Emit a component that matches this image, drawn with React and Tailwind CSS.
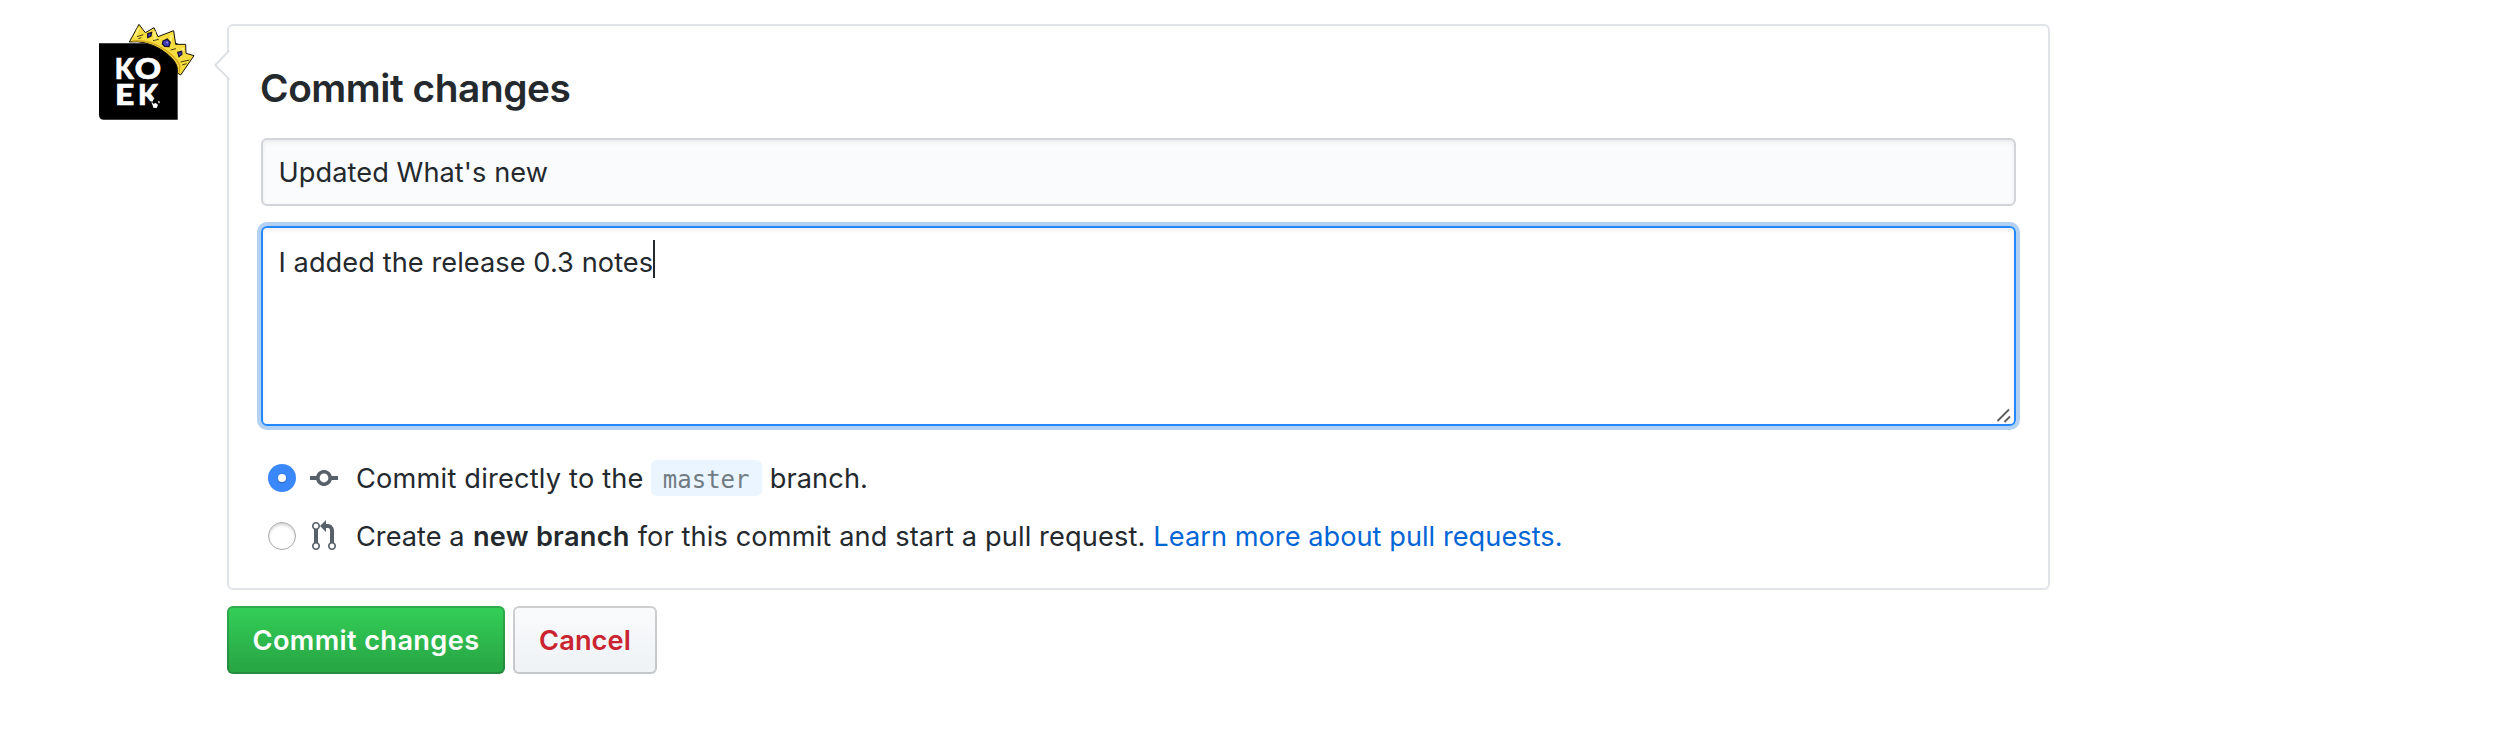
function Avatar() {
  return (
    <svg className="h-24 w-24 shrink-0" viewBox="57 42 288 288" aria-label="Koek">
      <path d="M57 100H293V329H72Q57 329 57 314Z" fill="#000" />
      <g fill="#fff" stroke="#fff" strokeWidth="2" fontFamily="Lato, sans-serif" fontWeight="900" fontSize="84">
        <text x="104" y="206" textLength="57" lengthAdjust="spacingAndGlyphs">K</text>
        <text x="164" y="206" textLength="79" lengthAdjust="spacingAndGlyphs">O</text>
        <text x="105" y="285" textLength="58" lengthAdjust="spacingAndGlyphs">E</text>
        <text x="174" y="285" textLength="60" lengthAdjust="spacingAndGlyphs">K</text>
      </g>
      <path d="M206 272L217 275L222 266L242 260V292H206Z" fill="#000" />
      <path d="M217 283L227 279L234 284L230 294L220 293ZM214 277l6 2l-3 5ZM233 273l7 2l-3 6Z" fill="#fff" />
      <path
        d="M148 96L177 43L196 68L222 53L234 80L281 62L287 103L317 103L318 130L342 137L302 195L292 189Q296 168 278 147Q244 111 197 99Q171 93 148 96Z"
        fill="#f6dc3e"
        stroke="#16120a"
        strokeWidth="3"
        strokeLinejoin="round"
      />
      <path d="M176 54L165 80M223 64L226 90M275 74L268 104M309 114L301 140" stroke="#fff07a" strokeWidth="7" fill="none" />
      <path d="M157 93Q205 88 248 115Q287 139 299 166L298 188" stroke="#d3a822" strokeWidth="4" fill="none" />
      <path d="M171 80L190 74M175 86L184 83M219 92L236 88M272 120L288 116M302 156L328 150M306 165L320 161" stroke="#2a2108" strokeWidth="2.5" fill="none" />
      <path d="M203 71L215 67L213 78L203 83ZM249 93L262 87L271 97L267 110L254 109L247 102ZM293 127L305 124L306 133L297 140Z" fill="#4038b4" stroke="#15102c" strokeWidth="3.5" />
      <path d="M256 96l7 -1l1 6Z" fill="#aaa6ee" />
    </svg>
  );
}

function CommitIcon() {
  return (
    <svg className="h-8 w-7" viewBox="0 0 14 16" fill="#586069">
      <path fillRule="evenodd" d="M10.86 7c-.45-1.72-2-3-3.86-3-1.86 0-3.41 1.28-3.86 3H0v2h3.14c.45 1.72 2 3 3.86 3 1.86 0 3.41-1.28 3.86-3H14V7h-3.14zM7 10.2c-1.22 0-2.2-.98-2.2-2.2 0-1.22.98-2.2 2.2-2.2 1.22 0 2.2.98 2.2 2.2 0 1.22-.98 2.2-2.2 2.2z" />
    </svg>
  );
}

function PullRequestIcon() {
  return (
    <svg className="h-8 w-6" viewBox="0 0 12 16" fill="#586069">
      <path fillRule="evenodd" d="M11 11.28V5c-.03-.78-.34-1.47-.94-2.06C9.46 2.35 8.78 2.03 8 2H7V0L4 3l3 3V4h1c.27.02.48.11.69.31.21.2.3.42.31.69v6.28A1.993 1.993 0 0010 15a1.993 1.993 0 001-3.72zm-1 2.92c-.66 0-1.2-.55-1.2-1.2 0-.65.55-1.2 1.2-1.2.65 0 1.2.55 1.2 1.2 0 .65-.55 1.2-1.2 1.2zM4 3c0-1.11-.89-2-2-2a1.993 1.993 0 00-1 3.72v6.56A1.993 1.993 0 002 15a1.993 1.993 0 001-3.72V4.72c.59-.34 1-.98 1-1.72zm-.8 10c0 .66-.55 1.2-1.2 1.2-.65 0-1.2-.55-1.2-1.2 0-.65.55-1.2 1.2-1.2.65 0 1.2.55 1.2 1.2zM2 4.2C1.34 4.2.8 3.65.8 3c0-.65.55-1.2 1.2-1.2.65 0 1.2.55 1.2 1.2 0 .65-.55 1.2-1.2 1.2z" />
    </svg>
  );
}

function Radio({ checked }) {
  return checked ? (
    <span role="radio" aria-checked="true" className="flex size-7 items-center justify-center rounded-full bg-[#3b88fd]">
      <span className="size-2 rounded-full bg-white shadow-[0_1px_2px_rgba(0,0,0,0.3)]" />
    </span>
  ) : (
    <span role="radio" aria-checked="false" className="size-7 rounded-full border border-[#a9a9a9] bg-white shadow-[inset_0_2px_3px_rgba(0,0,0,0.16)]" />
  );
}

export default function App() {
  return (
    <div className="h-[730px] bg-white pt-6 pl-[99px] font-['Inter',sans-serif] text-[27.2px] text-[#24292e]">
      <div className="flex items-start gap-8">
        <Avatar />
        <div className="flex w-[1823px] flex-col">
          <form className="relative flex h-[566px] flex-col rounded-md border-2 border-[#e1e4e8] px-8">
            <svg className="absolute top-[23px] -left-[15px] h-8 w-4" viewBox="0 0 16 32" fill="none">
              <path d="M17 0.5L1.5 16L17 31.5Z" fill="#fff" />
              <path d="M15.5 1.5L1.2 16L15.5 30.5" stroke="#dcdfe2" strokeWidth="1.8" />
            </svg>
            <h3 className="mt-[38px] -ml-px h-[48px] text-[38.8px] leading-[48px] font-semibold tracking-[-0.44px]">Commit changes</h3>
            <div className="mt-[26px] flex h-[68px] items-center rounded-md border-2 border-[#d1d5da] bg-[#fafbfc] px-[15.5px] pt-0.5 tracking-[0.06px] shadow-[inset_0_2px_4px_rgba(27,31,35,0.075)]">
              Updated What&#39;s new
            </div>
            <div className="relative mt-5 flex h-[200px] items-start rounded-md border-2 border-[#2188ff] px-[15.5px] pt-3 shadow-[inset_0_2px_4px_rgba(27,31,35,0.075),0_0_0_4px_rgba(3,102,214,0.3)]">
              <span className="mt-[5px] leading-[36px] tracking-[0.065px]">I added the release 0.3 notes</span>
              <span className="h-[38px] w-0.5 bg-[#24292e]" />
              <svg className="absolute right-[3px] bottom-px h-4 w-4" viewBox="0 0 16 16" stroke="#5c5c5c" strokeWidth="1.8">
                <path d="M2.5 14L14 2.5M9.5 15L15 9.5" />
              </svg>
            </div>
            <div className="mt-[34px] flex h-9 items-center pl-[7px]">
              <Radio checked />
              <span className="ml-[14px]"><CommitIcon /></span>
              <span className="ml-[18px] pt-0.5 tracking-[0.2px]">Commit directly to the</span>
              <code className="ml-[7px] flex h-9 w-[111px] items-center justify-center rounded-md bg-[#eaf5ff] pt-1 font-['DejaVu_Sans_Mono',monospace] text-[24px] text-[#717b82]">master</code>
              <span className="ml-2 pt-0.5 tracking-[0.1px]">branch.</span>
            </div>
            <div className="mt-[22px] flex h-9 items-center pl-[7px]">
              <Radio />
              <span className="ml-4"><PullRequestIcon /></span>
              <span className="ml-5 pt-0.5">Create a</span>
              <strong className="ml-[8.5px] pt-0.5 font-semibold tracking-[0.25px]">new branch</strong>
              <span className="ml-2 pt-0.5 tracking-[0.12px]">for this commit and start a pull request.</span>
              <a className="ml-2 pt-0.5 tracking-[0.03px] text-[#0366d6]">Learn more about pull requests.</a>
            </div>
          </form>
          <div className="mt-4 flex gap-2">
            <button className="h-[68px] w-[278px] rounded-md bg-linear-to-b from-[#34d058] to-[#28a745] to-90% pt-0.5 font-semibold tracking-[0.36px] text-white shadow-[inset_0_0_0_2px_rgba(27,31,35,0.2)]">Commit changes</button>
            <button className="h-[68px] w-[144px] rounded-md bg-linear-to-b from-[#fafbfc] to-[#eff3f6] to-90% pt-0.5 font-semibold tracking-[0.1px] text-[#cb2431] shadow-[inset_0_0_0_2px_rgba(27,31,35,0.2)]">Cancel</button>
          </div>
        </div>
      </div>
    </div>
  );
}
